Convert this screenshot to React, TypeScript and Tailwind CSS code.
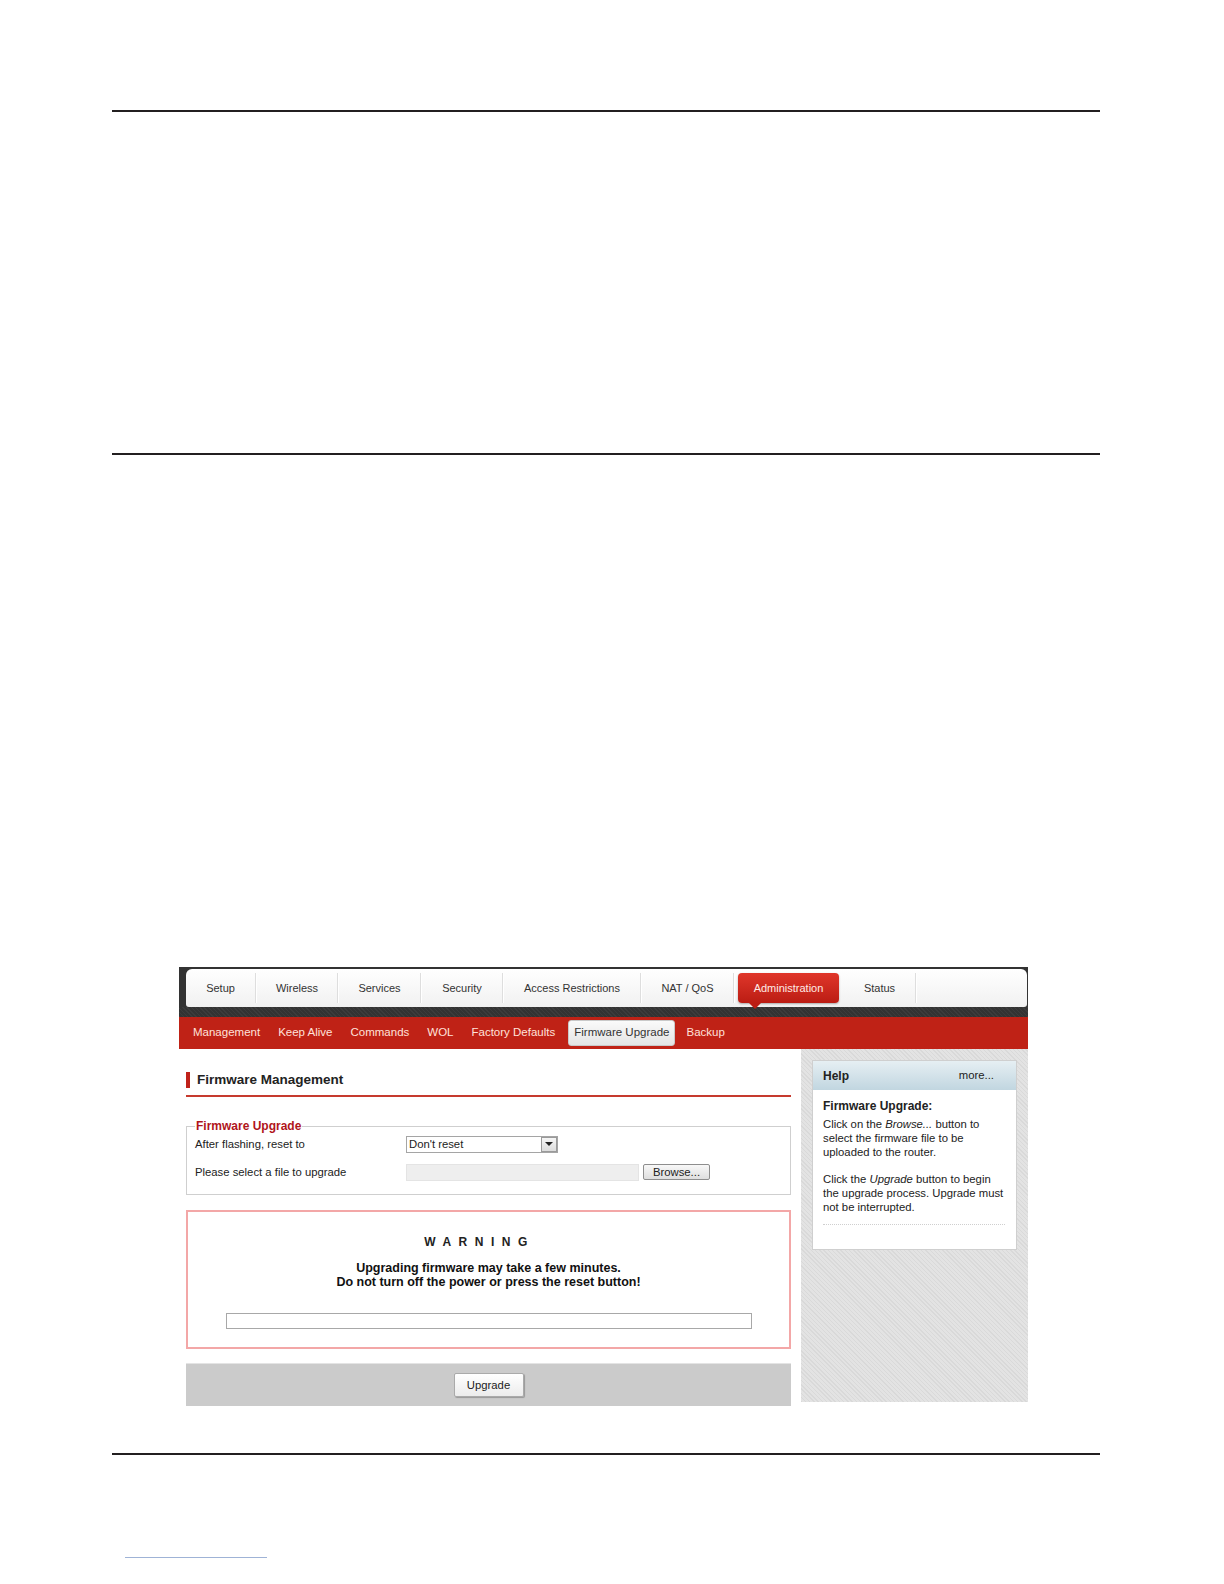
const font = "font-['Liberation_Sans',Arial,sans-serif]";

const tabs = [
  { label: "Setup", w: "w-[69px]" },
  { label: "Wireless", w: "w-[80px]" },
  { label: "Services", w: "w-[81px]" },
  { label: "Security", w: "w-[80px]" },
  { label: "Access Restrictions", w: "w-[136px]" },
  { label: "NAT / QoS", w: "w-[91px]" },
];

const subnav = ["Management", "Keep Alive", "Commands", "WOL", "Factory Defaults"];

function Separator() {
  return <div className="h-[30px] w-[2px] border-l border-[#dedede] border-r border-r-white" />;
}

function TabBar() {
  return (
    <div className="bg-[#333] pt-[2px] pl-[7px] pr-[1px]">
      <div className="flex h-[38px] items-center rounded-[6px] rounded-b-[3px] bg-gradient-to-b from-white to-[#f1f1f1] text-[11px] text-[#333]">
        {tabs.map((t) => (
          <div key={t.label} className="flex items-center">
            <div className={`${t.w} text-center`}>{t.label}</div>
            <Separator />
          </div>
        ))}
        <div className="relative ml-[3px] mr-[5px] flex h-[30px] w-[101px] items-center justify-center rounded-[4px] bg-gradient-to-b from-[#e0362a] to-[#bb1c13] text-[#ffeae6] shadow-[0_1px_2px_rgba(0,0,0,0.3)]">
          Administration
          <div className="absolute -bottom-[6px] left-[11px] h-0 w-0 border-x-[6px] border-t-[6px] border-x-transparent border-t-[#bb1c13]" />
        </div>
        <div className="w-[71px] text-center">Status</div>
        <Separator />
      </div>
      <div className="h-[10px] bg-[repeating-linear-gradient(45deg,#3c3c3c_0,#3c3c3c_1px,#333_1px,#333_3px)] -ml-[7px] -mr-[1px]" />
    </div>
  );
}

function SubNav() {
  return (
    <div className="flex h-[32px] items-center bg-[#bf2216] pl-[5px] text-[11.5px] text-[#ffe1da]">
      {subnav.map((s) => (
        <div key={s} className="px-[9px]">
          {s}
        </div>
      ))}
      <div className="ml-[4px] rounded-[3px] border border-[#c9c9c9] bg-gradient-to-b from-[#fafafa] to-[#e4e4e4] px-[5px] py-[3px] text-[#333]">
        Firmware Upgrade
      </div>
      <div className="px-[11px]">Backup</div>
    </div>
  );
}

function MainPanel() {
  return (
    <div className="w-[622px] bg-white pl-[7px] pr-[10px] text-[11.3px] text-[#222]">
      <div className="pt-[21px]">
        <div className="flex items-center gap-[7px] pb-[5px]">
          <div className="h-[16px] w-[4px] bg-[#c0221a]" />
          <div className="text-[13.5px] font-bold text-[#222]">Firmware Management</div>
        </div>
        <div className="h-[2px] bg-[#c63a2e]" />
      </div>

      <fieldset className="mt-[20px] h-[78px] border border-[#cfcfcf] px-[8px]">
        <legend className="px-[1px] text-[12px] font-bold text-[#b0141a]">Firmware Upgrade</legend>
        <div className="flex h-[18px] items-center">
          <div className="w-[211px]">After flashing, reset to</div>
          <div className="flex h-[17px] w-[152px] items-center border border-[#a5a5a5] bg-white">
            <div className="flex-1 pl-[2px]">Don&apos;t reset</div>
            <div className="flex h-[15px] w-[16px] items-center justify-center border border-[#9a9a9a] bg-gradient-to-b from-[#f6f6f6] to-[#dcdcdc]">
              <div className="h-0 w-0 border-x-[4px] border-t-[4px] border-x-transparent border-t-[#222]" />
            </div>
          </div>
        </div>
        <div className="mt-[10px] flex h-[18px] items-center">
          <div className="w-[211px]">Please select a file to upgrade</div>
          <div className="h-[17px] w-[233px] border border-[#e4e4e4] bg-[#eee]" />
          <div className="ml-[4px] flex h-[16px] w-[67px] items-center justify-center rounded-[2px] border border-[#8e8e8e] bg-gradient-to-b from-[#f8f8f8] to-[#dedede]">
            Browse...
          </div>
        </div>
      </fieldset>

      <div className="mt-[15px] flex h-[139px] flex-col items-center border-2 border-[#f3a7a7] pt-[21px]">
        <div className="pr-[18px] text-[12px] font-bold tracking-[7.5px] text-[#222]">WARNING</div>
        <div className="mt-[10px] text-center text-[12.5px] font-bold leading-[14px] text-[#111]">
          Upgrading firmware may take a few minutes.
          <br />
          Do not turn off the power or press the reset button!
        </div>
        <div className="mt-[24px] h-[16px] w-[526px] border border-[#a8a8a8] bg-white" />
      </div>

      <div className="mt-[14px] flex h-[43px] items-start justify-center border-t border-[#e4e4e4] bg-[#cbcbcb] pt-[9px]">
        <div className="flex h-[24px] w-[70px] items-center justify-center rounded-[2px] border border-[#aaa] bg-gradient-to-b from-white to-[#ececec] text-[#222] shadow-[1px_1px_1px_rgba(0,0,0,0.25)]">
          Upgrade
        </div>
      </div>
    </div>
  );
}

function HelpPanel() {
  return (
    <div className="w-[227px] bg-[repeating-linear-gradient(45deg,#d9d9d9_0,#d9d9d9_1px,#e3e3e3_1px,#e3e3e3_3px)] px-[11px] pt-[11px] text-[11.3px] text-[#222]">
      <div className="h-[190px] border border-[#cfcfcf] bg-white">
        <div className="flex h-[29px] items-center justify-between bg-gradient-to-b from-[#e6eff3] to-[#c1d6e0] pl-[10px] pr-[22px]">
          <span className="text-[12px] font-bold">Help</span>
          <span>more...</span>
        </div>
        <div className="whitespace-nowrap px-[10px] pt-[9px] leading-[14px]">
          <div className="text-[12px] font-bold">Firmware Upgrade:</div>
          <div className="mt-[4px]">
            Click on the <i>Browse...</i> button to
            <br />
            select the firmware file to be
            <br />
            uploaded to the router.
          </div>
          <div className="mt-[13px]">
            Click the <i>Upgrade</i> button to begin
            <br />
            the upgrade process. Upgrade must
            <br />
            not be interrupted.
          </div>
          <div className="mt-[10px] mr-[1px] border-t border-dotted border-[#cfcfcf]" />
        </div>
      </div>
    </div>
  );
}

export default function App() {
  return (
    <div className={`h-[1584px] w-[1224px] bg-white ${font}`}>
      <div className="pt-[110px] pl-[112px] pr-[124px]">
        <div className="h-[2px] bg-[#231f20]" />
        <div className="mt-[341px] h-[2px] bg-[#231f20]" />
      </div>

      <div className="ml-[179px] mt-[512px] w-[849px]">
        <TabBar />
        <SubNav />
        <div className="flex h-[353px]">
          <MainPanel />
          <HelpPanel />
        </div>
      </div>

      <div className="mt-[51px] pl-[112px] pr-[124px]">
        <div className="h-[2px] bg-[#231f20]" />
      </div>
      <div className="ml-[125px] mt-[102px] h-px w-[142px] bg-[#9fb3d6]" />
    </div>
  );
}
